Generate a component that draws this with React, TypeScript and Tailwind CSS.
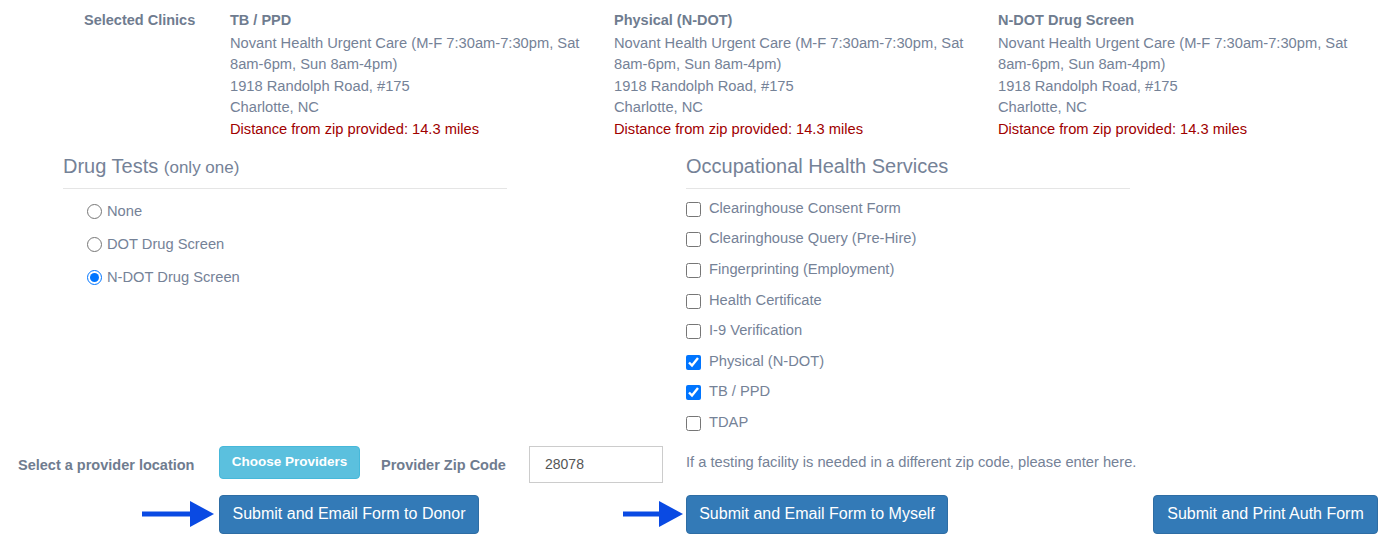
import React from "react";

const clinics = [
  { title: "TB / PPD" },
  { title: "Physical (N-DOT)" },
  { title: "N-DOT Drug Screen" },
];

const services = [
  { label: "Clearinghouse Consent Form", checked: false },
  { label: "Clearinghouse Query (Pre-Hire)", checked: false },
  { label: "Fingerprinting (Employment)", checked: false },
  { label: "Health Certificate", checked: false },
  { label: "I-9 Verification", checked: false },
  { label: "Physical (N-DOT)", checked: true },
  { label: "TB / PPD", checked: true },
  { label: "TDAP", checked: false },
];

const drugTests = [
  { label: "None", checked: false },
  { label: "DOT Drug Screen", checked: false },
  { label: "N-DOT Drug Screen", checked: true },
];

function Arrow({ width }: { width: number }) {
  return (
    <svg width={width} height={26} viewBox={`0 0 ${width} 26`}>
      <rect x={0} y={10.5} width={width - 22} height={5} fill="#0a4ae3" />
      <polygon points={`${width - 24},0 ${width},13 ${width - 24},26`} fill="#0a4ae3" />
    </svg>
  );
}

export default function App() {
  return (
    <div
      className="w-[1392px] h-[540px] bg-white text-[#758297] overflow-hidden"
      style={{ fontFamily: '"Liberation Sans", Arial, sans-serif' }}
    >
      {/* Selected clinics */}
      <div className="flex pt-[9.5px]">
        <div className="w-[230px] pl-[84px] font-bold text-[14.5px] leading-[21.5px] text-[#6f7c8f]">
          Selected Clinics
        </div>
        <div className="flex gap-[30px]">
          {clinics.map((c) => (
            <div key={c.title} className="w-[354px] text-[14.7px] leading-[21.5px]">
              <div className="font-bold text-[14.5px] text-[#6f7c8f] mb-[1.5px]">{c.title}</div>
              <div>Novant Health Urgent Care (M-F 7:30am-7:30pm, Sat 8am-6pm, Sun 8am-4pm)</div>
              <div>1918 Randolph Road, #175</div>
              <div>Charlotte, NC</div>
              <div className="text-[#a00000]">Distance from zip provided: 14.3 miles</div>
            </div>
          ))}
        </div>
      </div>

      {/* Middle section */}
      <div className="flex mt-[15px]">
        <div className="ml-[63px] w-[444px]">
          <div className="h-[34px] text-[20px] leading-[22px] border-b border-[#e5e5e5]">
            Drug Tests <span className="text-[17px] leading-none">(only one)</span>
          </div>
          <div className="mt-[6px] ml-[24px]">
            {drugTests.map((d) => (
              <label key={d.label} className="h-[33px] flex items-center gap-[5px] text-[14.7px]">
                <input
                  type="radio"
                  name="drug"
                  defaultChecked={d.checked}
                  className="w-[15px] h-[15px] m-0 accent-[#0075ff]"
                />
                <span>{d.label}</span>
              </label>
            ))}
          </div>
        </div>
        <div className="ml-[179px] w-[444px]">
          <div className="h-[34px] text-[20px] leading-[22px] border-b border-[#e5e5e5]">
            Occupational Health Services
          </div>
          <div className="mt-[3.5px]">
            {services.map((s) => (
              <label key={s.label} className="h-[30.6px] flex items-center gap-[8px] text-[14.7px]">
                <input
                  type="checkbox"
                  defaultChecked={s.checked}
                  className="w-[15px] h-[15px] m-0 mt-[3px] accent-[#0075ff]"
                />
                <span>{s.label}</span>
              </label>
            ))}
          </div>
        </div>
      </div>

      {/* Provider row */}
      <div className="flex items-center mt-[8.5px] h-[37px]">
        <div className="pl-[18px] w-[219px] mt-[3px] font-bold text-[14.5px] text-[#6f7c8f]">
          Select a provider location
        </div>
        <button className="self-start w-[141px] h-[33px] rounded-[4px] bg-[#5bc0de] border border-[#46b8da] text-white font-bold text-[13.5px]">
          Choose Providers
        </button>
        <div className="ml-[21px] w-[148px] mt-[3px] font-bold text-[14.5px] text-[#6f7c8f]">Provider Zip Code</div>
        <input
          defaultValue="28078"
          className="w-[134px] h-[37px] border border-[#cccccc] px-[15px] text-[14px] text-[#555555] outline-none"
        />
        <div className="ml-[23px] text-[14.7px] -mt-[4px]">
          If a testing facility is needed in a different zip code, please enter here.
        </div>
      </div>

      {/* Submit row */}
      <div className="flex items-center mt-[12px]">
        <div className="w-[219px] flex justify-end pr-[5px]">
          <Arrow width={72} />
        </div>
        <button className="w-[260px] h-[39px] rounded-[4px] bg-[#337ab7] border border-[#2e6da4] text-white text-[16px]">
          Submit and Email Form to Donor
        </button>
        <div className="w-[207px] flex justify-end pr-[3px]">
          <Arrow width={60} />
        </div>
        <button className="w-[262px] h-[39px] rounded-[4px] bg-[#337ab7] border border-[#2e6da4] text-white text-[16px]">
          Submit and Email Form to Myself
        </button>
        <button className="ml-auto mr-[14px] w-[225px] h-[39px] rounded-[4px] bg-[#337ab7] border border-[#2e6da4] text-white text-[16px]">
          Submit and Print Auth Form
        </button>
      </div>
    </div>
  );
}
